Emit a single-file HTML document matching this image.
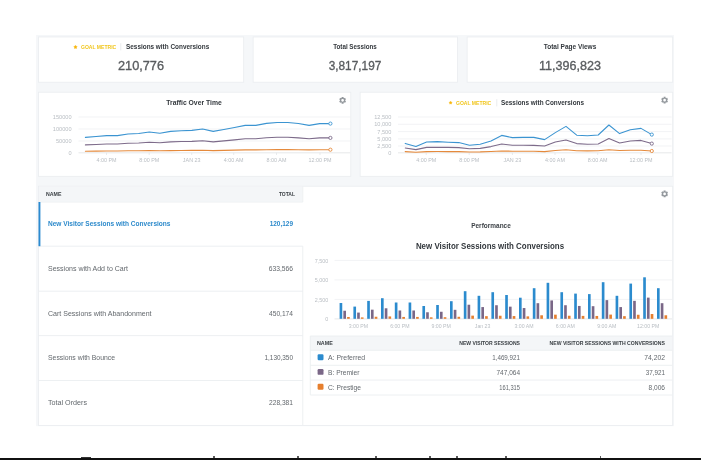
<!DOCTYPE html>
<html><head><meta charset="utf-8"><title>Dashboard</title>
<style>
html,body{margin:0;padding:0;}
body{width:701px;height:460px;position:relative;overflow:hidden;background:#fff;font-family:"Liberation Sans",sans-serif;}
.b{position:absolute;box-sizing:border-box;}
.card{background:#fff;border:1px solid #ebeef1;border-radius:1px;}
.t{position:absolute;white-space:nowrap;font-family:"Liberation Sans",sans-serif;}
.ov{position:absolute;left:0;top:0;}
</style></head><body>
<svg class="ov" width="701" height="460" viewBox="0 0 701 460"><rect x="36.1" y="35" width="637.8" height="391.2" fill="#f5f7f9"/><rect x="38.45" y="36.95" width="205.20" height="45.30" fill="#fff" stroke="#ebeef1" stroke-width="0.9"/><rect x="253.15" y="36.95" width="204.40" height="45.30" fill="#fff" stroke="#ebeef1" stroke-width="0.9"/><rect x="467.15" y="36.95" width="205.50" height="45.30" fill="#fff" stroke="#ebeef1" stroke-width="0.9"/><rect x="38.45" y="92.25" width="312.30" height="84.10" fill="#fff" stroke="#ebeef1" stroke-width="0.9"/><rect x="360.15" y="92.25" width="312.50" height="84.10" fill="#fff" stroke="#ebeef1" stroke-width="0.9"/><rect x="38.45" y="186.25" width="634.20" height="239.20" fill="#fff" stroke="#ebeef1" stroke-width="0.9"/><rect x="38.9" y="186.7" width="263.50" height="14.90" fill="#f4f6f8"/><line x1="38.90" x2="302.90" y1="202.00" y2="202.00" stroke="#ebeef1" stroke-width="0.9"/><line x1="302.80" x2="302.80" y1="186.70" y2="202.00" stroke="#ebeef1" stroke-width="0.9"/><line x1="302.80" x2="302.80" y1="246.20" y2="425.00" stroke="#ebeef1" stroke-width="0.9"/><line x1="38.90" x2="302.80" y1="246.20" y2="246.20" stroke="#ebeef1" stroke-width="0.9"/><line x1="38.90" x2="302.80" y1="291.20" y2="291.20" stroke="#ebeef1" stroke-width="0.9"/><line x1="38.90" x2="302.80" y1="335.60" y2="335.60" stroke="#ebeef1" stroke-width="0.9"/><line x1="38.90" x2="302.80" y1="380.50" y2="380.50" stroke="#ebeef1" stroke-width="0.9"/><rect x="38.5" y="202.0" width="1.9" height="44.2" fill="#2b8ad0"/><line x1="120.80" x2="120.80" y1="43.20" y2="50.40" stroke="#e8eaec" stroke-width="0.9"/><line x1="496.80" x2="496.80" y1="99.20" y2="106.40" stroke="#e8eaec" stroke-width="0.9"/><rect x="310.3" y="336.0" width="361.90" height="14.10" fill="#f4f6f8"/><line x1="310.30" x2="672.20" y1="336.00" y2="336.00" stroke="#ebeef1" stroke-width="0.9"/><line x1="310.30" x2="672.20" y1="350.30" y2="350.30" stroke="#ebeef1" stroke-width="0.9"/><line x1="310.30" x2="672.20" y1="365.30" y2="365.30" stroke="#ebeef1" stroke-width="0.9"/><line x1="310.30" x2="672.20" y1="380.10" y2="380.10" stroke="#ebeef1" stroke-width="0.9"/><line x1="310.30" x2="672.20" y1="395.00" y2="395.00" stroke="#ebeef1" stroke-width="0.9"/><line x1="310.30" x2="310.30" y1="336.00" y2="395.00" stroke="#ebeef1" stroke-width="0.9"/></svg>
<svg class="ov" width="701" height="460" viewBox="0 0 701 460"><line x1="78.5" x2="350.2" y1="117" y2="117" stroke="#eceef0" stroke-width="0.7"/><line x1="78.5" x2="350.2" y1="129" y2="129" stroke="#eceef0" stroke-width="0.7"/><line x1="78.5" x2="350.2" y1="141" y2="141" stroke="#eceef0" stroke-width="0.7"/><line x1="78.5" x2="350.2" y1="152.8" y2="152.8" stroke="#dfe2e5" stroke-width="0.8"/><line x1="106.5" x2="106.5" y1="152.8" y2="155" stroke="#dfe2e5" stroke-width="0.7"/><line x1="149.2" x2="149.2" y1="152.8" y2="155" stroke="#dfe2e5" stroke-width="0.7"/><line x1="191.7" x2="191.7" y1="152.8" y2="155" stroke="#dfe2e5" stroke-width="0.7"/><line x1="233.7" x2="233.7" y1="152.8" y2="155" stroke="#dfe2e5" stroke-width="0.7"/><line x1="276.5" x2="276.5" y1="152.8" y2="155" stroke="#dfe2e5" stroke-width="0.7"/><line x1="320" x2="320" y1="152.8" y2="155" stroke="#dfe2e5" stroke-width="0.7"/><path d="M85.4,151.2 L96.1,151.1 L106.7,151.0 L117.4,151.0 L128.0,150.8 L138.7,150.8 L149.3,150.6 L159.9,150.7 L170.6,150.6 L181.2,150.5 L191.9,150.4 L202.6,150.3 L213.2,150.6 L223.9,150.4 L234.5,150.1 L245.2,149.9 L255.8,149.9 L266.5,149.7 L277.1,149.6 L287.8,149.6 L298.4,149.7 L309.1,149.9 L319.7,149.7 L330.4,149.7" fill="none" stroke="#e58a3c" stroke-width="1.08" stroke-linejoin="round" stroke-linecap="round"/><path d="M85.4,144.9 L96.1,144.5 L106.7,144.0 L117.4,144.0 L128.0,143.2 L138.7,143.0 L149.3,142.2 L159.9,142.8 L170.6,141.9 L181.2,141.5 L191.9,141.4 L202.6,140.7 L213.2,141.9 L223.9,140.9 L234.5,139.9 L245.2,138.8 L255.8,138.8 L266.5,137.8 L277.1,137.3 L287.8,137.3 L298.4,137.9 L309.1,138.8 L319.7,137.9 L330.4,137.9" fill="none" stroke="#7d6b8a" stroke-width="1.08" stroke-linejoin="round" stroke-linecap="round"/><path d="M85.4,137.4 L96.1,136.5 L106.7,135.6 L117.4,135.6 L128.0,134.0 L138.7,133.5 L149.3,132.0 L159.9,133.2 L170.6,131.4 L181.2,130.7 L191.9,130.4 L202.6,129.0 L213.2,131.4 L223.9,129.5 L234.5,127.5 L245.2,125.4 L255.8,125.4 L266.5,123.4 L277.1,122.5 L287.8,122.5 L298.4,123.5 L309.1,125.4 L319.7,123.6 L330.4,123.6" fill="none" stroke="#3b94d1" stroke-width="1.08" stroke-linejoin="round" stroke-linecap="round"/><circle cx="330.4" cy="149.7" r="1.6" fill="#fff" stroke="#e58a3c" stroke-width="0.9"/><circle cx="330.4" cy="137.9" r="1.6" fill="#fff" stroke="#7d6b8a" stroke-width="0.9"/><circle cx="330.4" cy="123.6" r="1.6" fill="#fff" stroke="#3b94d1" stroke-width="0.9"/><line x1="398" x2="671.6" y1="117" y2="117" stroke="#eceef0" stroke-width="0.7"/><line x1="398" x2="671.6" y1="124.3" y2="124.3" stroke="#eceef0" stroke-width="0.7"/><line x1="398" x2="671.6" y1="131.6" y2="131.6" stroke="#eceef0" stroke-width="0.7"/><line x1="398" x2="671.6" y1="138.9" y2="138.9" stroke="#eceef0" stroke-width="0.7"/><line x1="398" x2="671.6" y1="146" y2="146" stroke="#eceef0" stroke-width="0.7"/><line x1="398" x2="671.6" y1="152.8" y2="152.8" stroke="#dfe2e5" stroke-width="0.8"/><line x1="426.2" x2="426.2" y1="152.8" y2="155" stroke="#dfe2e5" stroke-width="0.7"/><line x1="469.2" x2="469.2" y1="152.8" y2="155" stroke="#dfe2e5" stroke-width="0.7"/><line x1="512.4" x2="512.4" y1="152.8" y2="155" stroke="#dfe2e5" stroke-width="0.7"/><line x1="555" x2="555" y1="152.8" y2="155" stroke="#dfe2e5" stroke-width="0.7"/><line x1="597.7" x2="597.7" y1="152.8" y2="155" stroke="#dfe2e5" stroke-width="0.7"/><line x1="641" x2="641" y1="152.8" y2="155" stroke="#dfe2e5" stroke-width="0.7"/><path d="M405.2,151.6 L415.9,152.3 L426.6,151.6 L437.4,151.5 L448.1,151.6 L458.8,151.6 L469.5,152.0 L480.2,151.9 L491.0,151.5 L501.7,151.0 L512.4,151.2 L523.1,151.2 L533.8,151.2 L544.6,151.6 L555.3,150.5 L566.0,149.8 L576.7,150.8 L587.4,150.9 L598.2,150.8 L608.9,149.8 L619.6,150.5 L630.3,150.3 L641.0,150.2 L651.8,151.0" fill="none" stroke="#e58a3c" stroke-width="1.08" stroke-linejoin="round" stroke-linecap="round"/><path d="M405.2,148.0 L415.9,149.6 L426.6,147.4 L437.4,147.2 L448.1,147.4 L458.8,147.6 L469.5,148.8 L480.2,148.4 L491.0,146.6 L501.7,144.0 L512.4,145.2 L523.1,145.2 L533.8,145.4 L544.6,146.0 L555.3,142.0 L566.0,140.0 L576.7,143.6 L587.4,144.2 L598.2,144.0 L608.9,138.6 L619.6,143.0 L630.3,141.0 L641.0,140.4 L651.8,143.6" fill="none" stroke="#7d6b8a" stroke-width="1.08" stroke-linejoin="round" stroke-linecap="round"/><path d="M405.2,143.4 L415.9,146.4 L426.6,142.0 L437.4,141.6 L448.1,142.2 L458.8,142.6 L469.5,145.2 L480.2,144.2 L491.0,141.0 L501.7,135.4 L512.4,137.6 L523.1,137.4 L533.8,137.4 L544.6,139.6 L555.3,132.6 L566.0,126.4 L576.7,135.2 L587.4,135.8 L598.2,135.0 L608.9,125.0 L619.6,133.6 L630.3,129.8 L641.0,128.4 L651.8,134.6" fill="none" stroke="#3b94d1" stroke-width="1.08" stroke-linejoin="round" stroke-linecap="round"/><circle cx="651.8" cy="151.0" r="1.6" fill="#fff" stroke="#e58a3c" stroke-width="0.9"/><circle cx="651.8" cy="143.6" r="1.6" fill="#fff" stroke="#7d6b8a" stroke-width="0.9"/><circle cx="651.8" cy="134.6" r="1.6" fill="#fff" stroke="#3b94d1" stroke-width="0.9"/><line x1="334.5" x2="672" y1="260.4" y2="260.4" stroke="#eceef0" stroke-width="0.7"/><line x1="334.5" x2="672" y1="279.9" y2="279.9" stroke="#eceef0" stroke-width="0.7"/><line x1="334.5" x2="672" y1="299.4" y2="299.4" stroke="#eceef0" stroke-width="0.7"/><line x1="334.5" x2="672" y1="318.9" y2="318.9" stroke="#dfe2e5" stroke-width="0.8"/><rect x="339.60" y="303.00" width="2.65" height="15.80" fill="#2b8bce"/><rect x="343.35" y="310.74" width="2.65" height="8.06" fill="#7a6787"/><rect x="347.10" y="316.98" width="2.65" height="1.82" fill="#e67f2e"/><rect x="353.40" y="306.60" width="2.65" height="12.20" fill="#2b8bce"/><rect x="357.15" y="312.58" width="2.65" height="6.22" fill="#7a6787"/><rect x="360.90" y="317.40" width="2.65" height="1.40" fill="#e67f2e"/><rect x="367.20" y="300.90" width="2.65" height="17.90" fill="#2b8bce"/><rect x="370.95" y="309.67" width="2.65" height="9.13" fill="#7a6787"/><rect x="374.70" y="316.74" width="2.65" height="2.06" fill="#e67f2e"/><rect x="381.00" y="298.20" width="2.65" height="20.60" fill="#2b8bce"/><rect x="384.75" y="308.29" width="2.65" height="10.51" fill="#7a6787"/><rect x="388.50" y="316.43" width="2.65" height="2.37" fill="#e67f2e"/><rect x="394.80" y="302.50" width="2.65" height="16.30" fill="#2b8bce"/><rect x="398.55" y="310.49" width="2.65" height="8.31" fill="#7a6787"/><rect x="402.30" y="316.93" width="2.65" height="1.87" fill="#e67f2e"/><rect x="408.60" y="302.50" width="2.65" height="16.30" fill="#2b8bce"/><rect x="412.35" y="310.49" width="2.65" height="8.31" fill="#7a6787"/><rect x="416.10" y="316.93" width="2.65" height="1.87" fill="#e67f2e"/><rect x="422.40" y="306.00" width="2.65" height="12.80" fill="#2b8bce"/><rect x="426.15" y="312.27" width="2.65" height="6.53" fill="#7a6787"/><rect x="429.90" y="317.33" width="2.65" height="1.47" fill="#e67f2e"/><rect x="436.20" y="305.00" width="2.65" height="13.80" fill="#2b8bce"/><rect x="439.95" y="311.76" width="2.65" height="7.04" fill="#7a6787"/><rect x="443.70" y="317.21" width="2.65" height="1.59" fill="#e67f2e"/><rect x="450.00" y="301.20" width="2.65" height="17.60" fill="#2b8bce"/><rect x="453.75" y="309.82" width="2.65" height="8.98" fill="#7a6787"/><rect x="457.50" y="316.78" width="2.65" height="2.02" fill="#e67f2e"/><rect x="463.80" y="291.20" width="2.65" height="27.60" fill="#2b8bce"/><rect x="467.55" y="304.72" width="2.65" height="14.08" fill="#7a6787"/><rect x="471.30" y="315.63" width="2.65" height="3.17" fill="#e67f2e"/><rect x="477.60" y="295.80" width="2.65" height="23.00" fill="#2b8bce"/><rect x="481.35" y="307.07" width="2.65" height="11.73" fill="#7a6787"/><rect x="485.10" y="316.16" width="2.65" height="2.65" fill="#e67f2e"/><rect x="491.40" y="292.20" width="2.65" height="26.60" fill="#2b8bce"/><rect x="495.15" y="305.23" width="2.65" height="13.57" fill="#7a6787"/><rect x="498.90" y="315.74" width="2.65" height="3.06" fill="#e67f2e"/><rect x="505.20" y="295.00" width="2.65" height="23.80" fill="#2b8bce"/><rect x="508.95" y="306.66" width="2.65" height="12.14" fill="#7a6787"/><rect x="512.70" y="316.06" width="2.65" height="2.74" fill="#e67f2e"/><rect x="519.00" y="297.70" width="2.65" height="21.10" fill="#2b8bce"/><rect x="522.75" y="308.04" width="2.65" height="10.76" fill="#7a6787"/><rect x="526.50" y="316.37" width="2.65" height="2.43" fill="#e67f2e"/><rect x="532.80" y="288.20" width="2.65" height="30.60" fill="#2b8bce"/><rect x="536.55" y="303.19" width="2.65" height="15.61" fill="#7a6787"/><rect x="540.30" y="315.28" width="2.65" height="3.52" fill="#e67f2e"/><rect x="546.60" y="282.80" width="2.65" height="36.00" fill="#2b8bce"/><rect x="550.35" y="300.44" width="2.65" height="18.36" fill="#7a6787"/><rect x="554.10" y="314.66" width="2.65" height="4.14" fill="#e67f2e"/><rect x="560.40" y="292.20" width="2.65" height="26.60" fill="#2b8bce"/><rect x="564.15" y="305.23" width="2.65" height="13.57" fill="#7a6787"/><rect x="567.90" y="315.74" width="2.65" height="3.06" fill="#e67f2e"/><rect x="574.20" y="293.60" width="2.65" height="25.20" fill="#2b8bce"/><rect x="577.95" y="305.95" width="2.65" height="12.85" fill="#7a6787"/><rect x="581.70" y="315.90" width="2.65" height="2.90" fill="#e67f2e"/><rect x="588.00" y="294.10" width="2.65" height="24.70" fill="#2b8bce"/><rect x="591.75" y="306.20" width="2.65" height="12.60" fill="#7a6787"/><rect x="595.50" y="315.96" width="2.65" height="2.84" fill="#e67f2e"/><rect x="601.80" y="282.20" width="2.65" height="36.60" fill="#2b8bce"/><rect x="605.55" y="300.13" width="2.65" height="18.67" fill="#7a6787"/><rect x="609.30" y="314.59" width="2.65" height="4.21" fill="#e67f2e"/><rect x="615.60" y="295.80" width="2.65" height="23.00" fill="#2b8bce"/><rect x="619.35" y="307.07" width="2.65" height="11.73" fill="#7a6787"/><rect x="623.10" y="316.16" width="2.65" height="2.65" fill="#e67f2e"/><rect x="629.40" y="283.60" width="2.65" height="35.20" fill="#2b8bce"/><rect x="633.15" y="300.85" width="2.65" height="17.95" fill="#7a6787"/><rect x="636.90" y="314.75" width="2.65" height="4.05" fill="#e67f2e"/><rect x="643.20" y="277.30" width="2.65" height="41.50" fill="#2b8bce"/><rect x="646.95" y="297.63" width="2.65" height="21.16" fill="#7a6787"/><rect x="650.70" y="314.03" width="2.65" height="4.77" fill="#e67f2e"/><rect x="657.00" y="288.20" width="2.65" height="30.60" fill="#2b8bce"/><rect x="660.75" y="303.19" width="2.65" height="15.61" fill="#7a6787"/><rect x="664.50" y="315.28" width="2.65" height="3.52" fill="#e67f2e"/><path d="M341.56,96.91 L343.64,96.91 L343.51,97.81 L344.30,98.27 L345.02,97.70 L346.06,99.50 L345.21,99.84 L345.21,100.76 L346.06,101.10 L345.02,102.90 L344.30,102.33 L343.51,102.79 L343.64,103.69 L341.56,103.69 L341.69,102.79 L340.90,102.33 L340.18,102.90 L339.14,101.10 L339.99,100.76 L339.99,99.84 L339.14,99.50 L340.18,97.70 L340.90,98.27 L341.69,97.81Z M341.25,100.30 a1.35,1.35 0 1,0 2.7,0 a1.35,1.35 0 1,0 -2.7,0Z" fill="#93989d" fill-rule="evenodd"/><path d="M663.56,96.81 L665.64,96.81 L665.51,97.71 L666.30,98.17 L667.02,97.60 L668.06,99.40 L667.21,99.74 L667.21,100.66 L668.06,101.00 L667.02,102.80 L666.30,102.23 L665.51,102.69 L665.64,103.59 L663.56,103.59 L663.69,102.69 L662.90,102.23 L662.18,102.80 L661.14,101.00 L661.99,100.66 L661.99,99.74 L661.14,99.40 L662.18,97.60 L662.90,98.17 L663.69,97.71Z M663.25,100.20 a1.35,1.35 0 1,0 2.7,0 a1.35,1.35 0 1,0 -2.7,0Z" fill="#93989d" fill-rule="evenodd"/><path d="M663.56,190.51 L665.64,190.51 L665.51,191.41 L666.30,191.87 L667.02,191.30 L668.06,193.10 L667.21,193.44 L667.21,194.36 L668.06,194.70 L667.02,196.50 L666.30,195.93 L665.51,196.39 L665.64,197.29 L663.56,197.29 L663.69,196.39 L662.90,195.93 L662.18,196.50 L661.14,194.70 L661.99,194.36 L661.99,193.44 L661.14,193.10 L662.18,191.30 L662.90,191.87 L663.69,191.41Z M663.25,193.90 a1.35,1.35 0 1,0 2.7,0 a1.35,1.35 0 1,0 -2.7,0Z" fill="#93989d" fill-rule="evenodd"/><polygon points="75.50,45.30 76.11,46.26 77.21,46.54 76.49,47.42 76.56,48.56 75.50,48.14 74.44,48.56 74.51,47.42 73.79,46.54 74.89,46.26" fill="#f8b70c" stroke="#f8b70c" stroke-width="0.4" stroke-linejoin="round"/><polygon points="450.60,101.20 451.15,102.05 452.12,102.31 451.48,103.09 451.54,104.09 450.60,103.73 449.66,104.09 449.72,103.09 449.08,102.31 450.05,102.05" fill="#f8b70c" stroke="#f8b70c" stroke-width="0.4" stroke-linejoin="round"/><rect x="317.6" y="354.35" width="5.9" height="5.9" rx="1.2" fill="#2b8bce"/><rect x="317.6" y="368.95" width="5.9" height="5.9" rx="1.2" fill="#7a6787"/><rect x="317.6" y="383.75" width="5.9" height="5.9" rx="1.2" fill="#e67f2e"/></svg>
<div id="tl" style="position:absolute;left:0;top:0;width:701px;height:460px;will-change:transform;">
<span class="t" id="t0" style="left:80.60px;top:43.78px;font-size:5.2px;line-height:6.24px;font-weight:700;color:#f1c61d;transform:scaleX(0.9719);transform-origin:0 50%;">GOAL METRIC</span>
<span class="t" id="t1" style="left:126.30px;top:42.88px;font-size:7.2px;line-height:8.64px;font-weight:700;color:#33383d;transform:scaleX(0.8901);transform-origin:0 50%;">Sessions with Conversions</span>
<span class="t" id="t2" style="left:140.90px;top:57.60px;font-size:13px;line-height:15.60px;font-weight:400;color:#595c5f;transform:translateX(-50%) scaleX(0.9809);transform-origin:50% 50%;-webkit-text-stroke:0.34px #595c5f;">210,776</span>
<span class="t" id="t3" style="left:355.40px;top:42.88px;font-size:7.2px;line-height:8.64px;font-weight:700;color:#33383d;transform:translateX(-50%) scaleX(0.8705);transform-origin:50% 50%;">Total Sessions</span>
<span class="t" id="t4" style="left:355.40px;top:57.60px;font-size:13px;line-height:15.60px;font-weight:400;color:#595c5f;transform:translateX(-50%) scaleX(0.9111);transform-origin:50% 50%;-webkit-text-stroke:0.34px #595c5f;">3,817,197</span>
<span class="t" id="t5" style="left:570.00px;top:42.88px;font-size:7.2px;line-height:8.64px;font-weight:700;color:#33383d;transform:translateX(-50%) scaleX(0.9042);transform-origin:50% 50%;">Total Page Views</span>
<span class="t" id="t6" style="left:569.50px;top:57.60px;font-size:13px;line-height:15.60px;font-weight:400;color:#595c5f;transform:translateX(-50%) scaleX(0.9671);transform-origin:50% 50%;-webkit-text-stroke:0.34px #595c5f;">11,396,823</span>
<span class="t" id="t7" style="left:194.30px;top:98.88px;font-size:7.2px;line-height:8.64px;font-weight:700;color:#33383d;transform:translateX(-50%) scaleX(0.9472);transform-origin:50% 50%;">Traffic Over Time</span>
<span class="t" id="t8" style="left:71.50px;top:113.64px;font-size:5.6px;line-height:6.72px;font-weight:400;color:#b9bec3;transform:translateX(-100%) scaleX(1.0000);transform-origin:100% 50%;">150000</span>
<span class="t" id="t9" style="left:71.50px;top:125.64px;font-size:5.6px;line-height:6.72px;font-weight:400;color:#b9bec3;transform:translateX(-100%) scaleX(1.0000);transform-origin:100% 50%;">100000</span>
<span class="t" id="t10" style="left:71.50px;top:137.64px;font-size:5.6px;line-height:6.72px;font-weight:400;color:#b9bec3;transform:translateX(-100%) scaleX(1.0000);transform-origin:100% 50%;">50000</span>
<span class="t" id="t11" style="left:71.50px;top:150.04px;font-size:5.6px;line-height:6.72px;font-weight:400;color:#b9bec3;transform:translateX(-100%) scaleX(1.0000);transform-origin:100% 50%;">0</span>
<span class="t" id="t12" style="left:106.50px;top:156.56px;font-size:5.4px;line-height:6.48px;font-weight:400;color:#b9bec3;transform:translateX(-50%) scaleX(1.0000);transform-origin:50% 50%;">4:00 PM</span>
<span class="t" id="t13" style="left:149.20px;top:156.56px;font-size:5.4px;line-height:6.48px;font-weight:400;color:#b9bec3;transform:translateX(-50%) scaleX(1.0000);transform-origin:50% 50%;">8:00 PM</span>
<span class="t" id="t14" style="left:191.70px;top:156.56px;font-size:5.4px;line-height:6.48px;font-weight:400;color:#b9bec3;transform:translateX(-50%) scaleX(1.0000);transform-origin:50% 50%;">JAN 23</span>
<span class="t" id="t15" style="left:233.70px;top:156.56px;font-size:5.4px;line-height:6.48px;font-weight:400;color:#b9bec3;transform:translateX(-50%) scaleX(1.0000);transform-origin:50% 50%;">4:00 AM</span>
<span class="t" id="t16" style="left:276.50px;top:156.56px;font-size:5.4px;line-height:6.48px;font-weight:400;color:#b9bec3;transform:translateX(-50%) scaleX(1.0000);transform-origin:50% 50%;">8:00 AM</span>
<span class="t" id="t17" style="left:320.00px;top:156.56px;font-size:5.4px;line-height:6.48px;font-weight:400;color:#b9bec3;transform:translateX(-50%) scaleX(1.0000);transform-origin:50% 50%;">12:00 PM</span>
<span class="t" id="t18" style="left:455.90px;top:99.68px;font-size:5.2px;line-height:6.24px;font-weight:700;color:#f1c61d;transform:scaleX(0.9719);transform-origin:0 50%;">GOAL METRIC</span>
<span class="t" id="t19" style="left:501.10px;top:98.88px;font-size:7.2px;line-height:8.64px;font-weight:700;color:#33383d;transform:scaleX(0.8880);transform-origin:0 50%;">Sessions with Conversions</span>
<span class="t" id="t20" style="left:391.30px;top:113.64px;font-size:5.6px;line-height:6.72px;font-weight:400;color:#b9bec3;transform:translateX(-100%) scaleX(1.0000);transform-origin:100% 50%;">12,500</span>
<span class="t" id="t21" style="left:391.30px;top:120.94px;font-size:5.6px;line-height:6.72px;font-weight:400;color:#b9bec3;transform:translateX(-100%) scaleX(1.0000);transform-origin:100% 50%;">10,000</span>
<span class="t" id="t22" style="left:391.30px;top:128.64px;font-size:5.6px;line-height:6.72px;font-weight:400;color:#b9bec3;transform:translateX(-100%) scaleX(1.0000);transform-origin:100% 50%;">7,500</span>
<span class="t" id="t23" style="left:391.30px;top:135.54px;font-size:5.6px;line-height:6.72px;font-weight:400;color:#b9bec3;transform:translateX(-100%) scaleX(1.0000);transform-origin:100% 50%;">5,000</span>
<span class="t" id="t24" style="left:391.30px;top:142.64px;font-size:5.6px;line-height:6.72px;font-weight:400;color:#b9bec3;transform:translateX(-100%) scaleX(1.0000);transform-origin:100% 50%;">2,500</span>
<span class="t" id="t25" style="left:391.30px;top:150.04px;font-size:5.6px;line-height:6.72px;font-weight:400;color:#b9bec3;transform:translateX(-100%) scaleX(1.0000);transform-origin:100% 50%;">0</span>
<span class="t" id="t26" style="left:426.20px;top:156.56px;font-size:5.4px;line-height:6.48px;font-weight:400;color:#b9bec3;transform:translateX(-50%) scaleX(1.0000);transform-origin:50% 50%;">4:00 PM</span>
<span class="t" id="t27" style="left:469.20px;top:156.56px;font-size:5.4px;line-height:6.48px;font-weight:400;color:#b9bec3;transform:translateX(-50%) scaleX(1.0000);transform-origin:50% 50%;">8:00 PM</span>
<span class="t" id="t28" style="left:512.40px;top:156.56px;font-size:5.4px;line-height:6.48px;font-weight:400;color:#b9bec3;transform:translateX(-50%) scaleX(1.0000);transform-origin:50% 50%;">JAN 23</span>
<span class="t" id="t29" style="left:555.00px;top:156.56px;font-size:5.4px;line-height:6.48px;font-weight:400;color:#b9bec3;transform:translateX(-50%) scaleX(1.0000);transform-origin:50% 50%;">4:00 AM</span>
<span class="t" id="t30" style="left:597.70px;top:156.56px;font-size:5.4px;line-height:6.48px;font-weight:400;color:#b9bec3;transform:translateX(-50%) scaleX(1.0000);transform-origin:50% 50%;">8:00 AM</span>
<span class="t" id="t31" style="left:641.00px;top:156.56px;font-size:5.4px;line-height:6.48px;font-weight:400;color:#b9bec3;transform:translateX(-50%) scaleX(1.0000);transform-origin:50% 50%;">12:00 PM</span>
<span class="t" id="t32" style="left:46.00px;top:190.98px;font-size:5.2px;line-height:6.24px;font-weight:700;color:#3b4045;transform:scaleX(1.0078);transform-origin:0 50%;">NAME</span>
<span class="t" id="t33" style="left:294.80px;top:190.98px;font-size:5.2px;line-height:6.24px;font-weight:700;color:#3b4045;transform:translateX(-100%) scaleX(0.9576);transform-origin:100% 50%;">TOTAL</span>
<span class="t" id="t34" style="left:47.50px;top:219.62px;font-size:6.8px;line-height:8.16px;font-weight:700;color:#2d8acb;transform:scaleX(0.9633);transform-origin:0 50%;">New Visitor Sessions with Conversions</span>
<span class="t" id="t35" style="left:293.20px;top:219.62px;font-size:6.8px;line-height:8.16px;font-weight:700;color:#2d8acb;transform:translateX(-100%) scaleX(0.9480);transform-origin:100% 50%;">120,129</span>
<span class="t" id="t36" style="left:47.50px;top:264.92px;font-size:6.8px;line-height:8.16px;font-weight:400;color:#63686d;transform:scaleX(1.0329);transform-origin:0 50%;">Sessions with Add to Cart</span>
<span class="t" id="t37" style="left:293.00px;top:264.92px;font-size:6.8px;line-height:8.16px;font-weight:400;color:#63686d;transform:translateX(-100%) scaleX(0.9887);transform-origin:100% 50%;">633,566</span>
<span class="t" id="t38" style="left:47.50px;top:309.52px;font-size:6.8px;line-height:8.16px;font-weight:400;color:#63686d;transform:scaleX(1.0337);transform-origin:0 50%;">Cart Sessions with Abandonment</span>
<span class="t" id="t39" style="left:293.00px;top:309.52px;font-size:6.8px;line-height:8.16px;font-weight:400;color:#63686d;transform:translateX(-100%) scaleX(0.9765);transform-origin:100% 50%;">450,174</span>
<span class="t" id="t40" style="left:47.50px;top:353.92px;font-size:6.8px;line-height:8.16px;font-weight:400;color:#63686d;transform:scaleX(1.0075);transform-origin:0 50%;">Sessions with Bounce</span>
<span class="t" id="t41" style="left:293.00px;top:353.92px;font-size:6.8px;line-height:8.16px;font-weight:400;color:#63686d;transform:translateX(-100%) scaleX(0.9421);transform-origin:100% 50%;">1,130,350</span>
<span class="t" id="t42" style="left:47.50px;top:399.12px;font-size:6.8px;line-height:8.16px;font-weight:400;color:#63686d;transform:scaleX(1.0532);transform-origin:0 50%;">Total Orders</span>
<span class="t" id="t43" style="left:293.00px;top:399.12px;font-size:6.8px;line-height:8.16px;font-weight:400;color:#63686d;transform:translateX(-100%) scaleX(0.9765);transform-origin:100% 50%;">228,381</span>
<span class="t" id="t44" style="left:490.70px;top:222.34px;font-size:6.6px;line-height:7.92px;font-weight:700;color:#3d4247;transform:translateX(-50%) scaleX(0.9819);transform-origin:50% 50%;">Performance</span>
<span class="t" id="t45" style="left:490.40px;top:241.42px;font-size:8.8px;line-height:10.56px;font-weight:700;color:#33383d;transform:translateX(-50%) scaleX(0.9004);transform-origin:50% 50%;">New Visitor Sessions with Conversions</span>
<span class="t" id="t46" style="left:328.30px;top:257.56px;font-size:5.4px;line-height:6.48px;font-weight:400;color:#b9bec3;transform:translateX(-100%) scaleX(1.0000);transform-origin:100% 50%;">7,500</span>
<span class="t" id="t47" style="left:328.30px;top:277.06px;font-size:5.4px;line-height:6.48px;font-weight:400;color:#b9bec3;transform:translateX(-100%) scaleX(1.0000);transform-origin:100% 50%;">5,000</span>
<span class="t" id="t48" style="left:328.30px;top:296.66px;font-size:5.4px;line-height:6.48px;font-weight:400;color:#b9bec3;transform:translateX(-100%) scaleX(1.0000);transform-origin:100% 50%;">2,500</span>
<span class="t" id="t49" style="left:328.30px;top:315.76px;font-size:5.4px;line-height:6.48px;font-weight:400;color:#b9bec3;transform:translateX(-100%) scaleX(1.0000);transform-origin:100% 50%;">0</span>
<span class="t" id="t50" style="left:358.40px;top:322.58px;font-size:5.2px;line-height:6.24px;font-weight:400;color:#b9bec3;transform:translateX(-50%) scaleX(1.0000);transform-origin:50% 50%;">3:00 PM</span>
<span class="t" id="t51" style="left:399.80px;top:322.58px;font-size:5.2px;line-height:6.24px;font-weight:400;color:#b9bec3;transform:translateX(-50%) scaleX(1.0000);transform-origin:50% 50%;">6:00 PM</span>
<span class="t" id="t52" style="left:441.20px;top:322.58px;font-size:5.2px;line-height:6.24px;font-weight:400;color:#b9bec3;transform:translateX(-50%) scaleX(1.0000);transform-origin:50% 50%;">9:00 PM</span>
<span class="t" id="t53" style="left:482.60px;top:322.58px;font-size:5.2px;line-height:6.24px;font-weight:400;color:#b9bec3;transform:translateX(-50%) scaleX(1.0000);transform-origin:50% 50%;">Jan 23</span>
<span class="t" id="t54" style="left:524.00px;top:322.58px;font-size:5.2px;line-height:6.24px;font-weight:400;color:#b9bec3;transform:translateX(-50%) scaleX(1.0000);transform-origin:50% 50%;">3:00 AM</span>
<span class="t" id="t55" style="left:565.40px;top:322.58px;font-size:5.2px;line-height:6.24px;font-weight:400;color:#b9bec3;transform:translateX(-50%) scaleX(1.0000);transform-origin:50% 50%;">6:00 AM</span>
<span class="t" id="t56" style="left:606.80px;top:322.58px;font-size:5.2px;line-height:6.24px;font-weight:400;color:#b9bec3;transform:translateX(-50%) scaleX(1.0000);transform-origin:50% 50%;">9:00 AM</span>
<span class="t" id="t57" style="left:648.20px;top:322.58px;font-size:5.2px;line-height:6.24px;font-weight:400;color:#b9bec3;transform:translateX(-50%) scaleX(1.0000);transform-origin:50% 50%;">12:00 PM</span>
<span class="t" id="t58" style="left:317.20px;top:340.40px;font-size:5.0px;line-height:6.00px;font-weight:700;color:#3b4045;transform:scaleX(1.0723);transform-origin:0 50%;">NAME</span>
<span class="t" id="t59" style="left:520.20px;top:340.40px;font-size:5.0px;line-height:6.00px;font-weight:700;color:#3b4045;transform:translateX(-100%) scaleX(1.0130);transform-origin:100% 50%;">NEW VISITOR SESSIONS</span>
<span class="t" id="t60" style="left:664.70px;top:340.40px;font-size:5.0px;line-height:6.00px;font-weight:700;color:#3b4045;transform:translateX(-100%) scaleX(1.0274);transform-origin:100% 50%;">NEW VISITOR SESSIONS WITH CONVERSIONS</span>
<span class="t" id="t61" style="left:328.00px;top:353.74px;font-size:6.6px;line-height:7.92px;font-weight:400;color:#63686d;transform:scaleX(1.0460);transform-origin:0 50%;">A: Preferred</span>
<span class="t" id="t62" style="left:520.20px;top:353.74px;font-size:6.6px;line-height:7.92px;font-weight:400;color:#63686d;transform:translateX(-100%) scaleX(0.9474);transform-origin:100% 50%;">1,469,921</span>
<span class="t" id="t63" style="left:665.10px;top:353.74px;font-size:6.6px;line-height:7.92px;font-weight:400;color:#63686d;transform:translateX(-100%) scaleX(1.0311);transform-origin:100% 50%;">74,202</span>
<span class="t" id="t64" style="left:328.00px;top:368.64px;font-size:6.6px;line-height:7.92px;font-weight:400;color:#63686d;transform:scaleX(1.0110);transform-origin:0 50%;">B: Premier</span>
<span class="t" id="t65" style="left:520.20px;top:368.64px;font-size:6.6px;line-height:7.92px;font-weight:400;color:#63686d;transform:translateX(-100%) scaleX(0.9856);transform-origin:100% 50%;">747,064</span>
<span class="t" id="t66" style="left:665.10px;top:368.64px;font-size:6.6px;line-height:7.92px;font-weight:400;color:#63686d;transform:translateX(-100%) scaleX(0.9568);transform-origin:100% 50%;">37,921</span>
<span class="t" id="t67" style="left:328.00px;top:383.54px;font-size:6.6px;line-height:7.92px;font-weight:400;color:#63686d;transform:scaleX(1.0115);transform-origin:0 50%;">C: Prestige</span>
<span class="t" id="t68" style="left:520.20px;top:383.54px;font-size:6.6px;line-height:7.92px;font-weight:400;color:#63686d;transform:translateX(-100%) scaleX(0.8682);transform-origin:100% 50%;">161,315</span>
<span class="t" id="t69" style="left:665.10px;top:383.54px;font-size:6.6px;line-height:7.92px;font-weight:400;color:#63686d;transform:translateX(-100%) scaleX(0.9930);transform-origin:100% 50%;">8,006</span>
</div>
<div class="b" style="left:0;top:457.8px;width:701px;height:2.2px;background:#111;"></div>
<div class="b" style="left:81px;top:456.9px;width:10px;height:1.2px;background:#333;"></div>
<div class="b" style="left:213.2px;top:456.1px;width:1.8px;height:2px;background:#5a5a5a;"></div>
<div class="b" style="left:297.3px;top:456.1px;width:1.8px;height:2px;background:#5a5a5a;"></div>
<div class="b" style="left:374.8px;top:456.1px;width:1.8px;height:2px;background:#5a5a5a;"></div>
<div class="b" style="left:428.8px;top:456.1px;width:1.8px;height:2px;background:#5a5a5a;"></div>
<div class="b" style="left:456.0px;top:456.1px;width:1.8px;height:2px;background:#5a5a5a;"></div>
<div class="b" style="left:505.0px;top:456.1px;width:1.8px;height:2px;background:#5a5a5a;"></div>
<div class="b" style="left:599.6px;top:456.1px;width:1.8px;height:2px;background:#5a5a5a;"></div>
</body></html>
